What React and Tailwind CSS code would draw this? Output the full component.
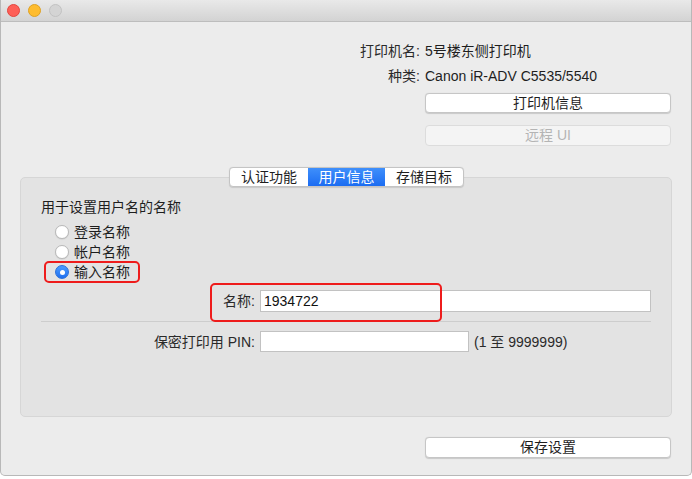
import { useState } from "react";

const font = { fontFamily: '"Liberation Sans", "Noto Sans CJK SC", sans-serif' };

function Radio({ checked, label, onClick }) {
    return (
        <div className="flex h-[20px] items-center gap-[5px] cursor-default" onClick={onClick}>
            {checked ? (
                <span className="flex h-[14px] w-[14px] items-center justify-center rounded-full bg-gradient-to-b from-[#4c9cff] to-[#1f6ff0] border border-[#2a6fd8]">
                    <span className="h-[5px] w-[5px] rounded-full bg-white" />
                </span>
            ) : (
                <span className="h-[14px] w-[14px] rounded-full bg-white border border-[#b9b9b9] shadow-[0_0.5px_1px_rgba(0,0,0,0.12)]" />
            )}
            <span className="text-[14px] leading-[20px] text-[#1e1e1e]">{label}</span>
        </div>
    );
}

export default function App() {
    const [mode, setMode] = useState(2);
    const [tab, setTab] = useState(1);
    const tabs = ["认证功能", "用户信息", "存储目标"];

    return (
        <div className="h-[479px] w-[692px] bg-white" style={font}>
            <div className="flex h-[476px] flex-col overflow-hidden rounded-b-[5px] border-x border-b border-[#b8b8b8] bg-[#ececec]">
                {/* Title bar */}
                <div className="flex h-[22px] shrink-0 items-center gap-[8px] border-b border-[#bdbdbd] bg-gradient-to-b from-[#e9e9e9] to-[#d3d3d3] pl-[6px]">
                    <span className="h-[13px] w-[13px] rounded-full bg-[#fe5f57] border border-[#e2463f]" />
                    <span className="h-[13px] w-[13px] rounded-full bg-[#febc2e] border border-[#dea123]" />
                    <span className="h-[13px] w-[13px] rounded-full bg-[#d4d4d4] border border-[#c2c2c2]" />
                </div>

                {/* Printer info */}
                <div className="grid grid-cols-[1fr_246px] gap-x-[5px] pr-[20px] pt-[19px] text-[14px] leading-[20px] text-[#1e1e1e]">
                    <div className="text-right text-[#2a2a2a]">打印机名:</div>
                    <div>5号楼东侧打印机</div>
                    <div className="mt-[5px] text-right text-[#2a2a2a]">种类:</div>
                    <div className="mt-[5px]">Canon iR-ADV C5535/5540</div>
                    <div />
                    <button className="mt-[7px] h-[20px] rounded-[4px] border border-[#c6c6c6] bg-white text-[14px] leading-[18px] text-[#1e1e1e] shadow-[0_0.5px_1px_rgba(0,0,0,0.15)]">
                        打印机信息
                    </button>
                    <div />
                    <button disabled className="mt-[12px] h-[21px] rounded-[4px] border border-[#dcdcdc] bg-[#f4f4f4] text-[14px] leading-[19px] text-[#b4b4b4]">
                        远程 UI
                    </button>
                </div>

                {/* Tabs */}
                <div className="relative z-10 mt-[21px] flex justify-center pl-[1px]">
                    <div className="flex h-[20px] overflow-hidden rounded-[4px] border border-[#c4c4c4] bg-white shadow-[0_0.5px_1px_rgba(0,0,0,0.12)]">
                        {tabs.map((t, i) => (
                            <button
                                key={t}
                                onClick={() => setTab(i)}
                                className={
                                    i === tab
                                        ? "w-[77px] bg-gradient-to-b from-[#3f8ffb] to-[#1b6cf2] text-[14px] leading-[18px] text-white"
                                        : "w-[78px] text-[14px] leading-[18px] text-[#1e1e1e]"
                                }
                            >
                                {t}
                            </button>
                        ))}
                    </div>
                </div>

                {/* Group box */}
                <div className="relative mx-[19px] -mt-[10px] h-[240px] rounded-[5px] border border-[#d6d6d6] bg-[#e3e3e3] px-[20px] pt-[19px]">
                    <div className="text-[14px] leading-[20px] text-[#1e1e1e]">用于设置用户名的名称</div>
                    <div className="mt-[5px] pl-[14px]">
                        <Radio checked={mode === 0} label="登录名称" onClick={() => setMode(0)} />
                        <Radio checked={mode === 1} label="帐户名称" onClick={() => setMode(1)} />
                        <Radio checked={mode === 2} label="输入名称" onClick={() => setMode(2)} />
                    </div>

                    <div className="mt-[8px] grid grid-cols-[214px_1fr] items-center gap-x-[5px]">
                        <div className="text-right text-[14px] leading-[20px] text-[#2a2a2a]">名称:</div>
                        <input
                            defaultValue="1934722"
                            className="h-[22px] w-full border border-[#c2c2c2] bg-white px-[3px] text-[14px] text-[#111] outline-none"
                        />
                    </div>

                    <div className="mt-[9px] h-px bg-[#cdcdcd]" />

                    <div className="mt-[9px] grid grid-cols-[214px_209px_1fr] items-center gap-x-[5px]">
                        <div className="text-right text-[14px] leading-[20px] text-[#2a2a2a]">保密打印用 PIN:</div>
                        <input className="h-[21px] w-full border border-[#c2c2c2] bg-white px-[3px] text-[14px] outline-none" />
                        <div className="text-[14px] leading-[20px] text-[#2a2a2a]">(1 至 9999999)</div>
                    </div>

                    {/* annotation boxes */}
                    <div className="pointer-events-none absolute left-[23px] top-[83px] h-[22px] w-[96px] rounded-[5px] border-2 border-[#ee1c1c]" />
                    <div className="pointer-events-none absolute left-[189px] top-[105px] h-[39px] w-[232px] rounded-[5px] border-2 border-[#ee1c1c]" />
                </div>

                {/* Save */}
                <div className="flex justify-end pr-[20px] pt-[20px]">
                    <button className="h-[21px] w-[246px] rounded-[4px] border border-[#c6c6c6] bg-white text-[14px] leading-[19px] text-[#1e1e1e] shadow-[0_0.5px_1px_rgba(0,0,0,0.15)]">
                        保存设置
                    </button>
                </div>
            </div>
        </div>
    );
}
